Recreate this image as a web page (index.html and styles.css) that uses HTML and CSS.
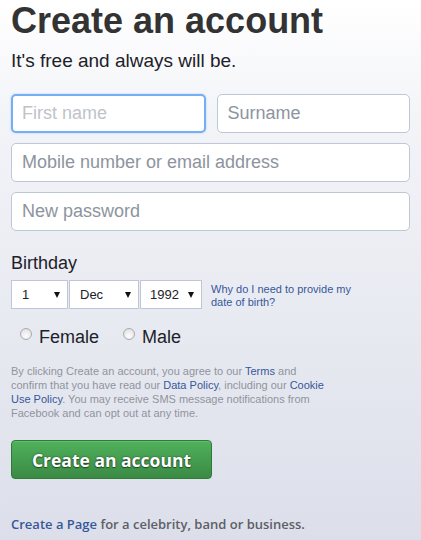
FILE: index.html
```html
<!DOCTYPE html>
<html lang="en">
<head>
<meta charset="utf-8">
<title>Create an account</title>
<link rel="stylesheet" href="styles.css">
</head>
<body>
<main class="signup">
  <h1 class="title">Create an account</h1>
  <p class="subtitle">It's free and always will be.</p>

  <div class="fields">
    <div class="row">
      <input class="field focused" type="text" placeholder="First name">
      <input class="field" type="text" placeholder="Surname">
    </div>
    <input class="field" type="text" placeholder="Mobile number or email address">
    <input class="field" type="password" placeholder="New password">
  </div>

  <div class="birthday">
    <div class="label">Birthday</div>
    <div class="bday-row">
      <div class="selects">
        <span class="select s-day"><select><option>1</option></select></span>
        <span class="select s-month"><select><option>Dec</option></select></span>
        <span class="select s-year"><select><option>1992</option></select></span>
      </div>
      <a class="why" href="#">Why do I need to provide my date of birth?</a>
    </div>
  </div>

  <div class="gender">
    <label class="radio"><input type="radio" name="sex"><span>Female</span></label>
    <label class="radio"><input type="radio" name="sex"><span>Male</span></label>
  </div>

  <p class="terms">By clicking Create an account, you agree to our <a href="#">Terms</a> and confirm that you have read our <a href="#">Data Policy</a>, including our <a href="#">Cookie Use Policy</a>. You may receive SMS message notifications from Facebook and can opt out at any time.</p>

  <button class="submit" type="button">Create an account</button>

  <hr class="sep">

  <p class="page-link"><a href="#">Create a Page</a> for a celebrity, band or business.</p>
</main>
</body>
</html>
```

FILE: styles.css
```css
html, body {
  margin: 0;
  padding: 0;
}
body {
  width: 421px;
  height: 540px;
  overflow: hidden;
  background: linear-gradient(#ffffff 0px, #f3f4f8 120px, #dcdfea 540px);
  font-family: "Liberation Sans", Arial, sans-serif;
  color: #1d2129;
}
.signup {
  padding: 0 11px;
  width: 399px;
}
.title {
  margin: 0;
  font-size: 36px;
  font-weight: bold;
  color: #333333;
  line-height: 41px;
}
.subtitle {
  margin: 9px 0 0;
  font-size: 19px;
  line-height: 22px;
  color: #1d2129;
}
.fields {
  margin-top: 22px;
  display: flex;
  flex-direction: column;
  gap: 10px;
}
.row {
  display: flex;
  gap: 11px;
}
.field {
  box-sizing: border-box;
  height: 39px;
  width: 100%;
  margin: 0;
  border: 1px solid #bdc7d8;
  border-radius: 5px;
  background: #fff;
  padding: 0 10px;
  font-family: "Liberation Sans", Arial, sans-serif;
  font-size: 18px;
  color: #1d2129;
  outline: none;
}
.row .field {
  flex: 1 1 0;
  min-width: 0;
}
.field::placeholder {
  color: #8d949e;
}
.field.focused {
  border: 2px solid #75aef4;
  padding-left: 9px;
  box-shadow: 0 0 2px rgba(110, 170, 240, 0.6);
}
.field.focused::placeholder {
  color: #bec3c9;
}
.birthday {
  margin-top: 22px;
}
.label {
  font-size: 18px;
  line-height: 21px;
  color: #1d2129;
}
.bday-row {
  margin-top: 6px;
  display: flex;
  align-items: flex-start;
}
.selects {
  display: flex;
  gap: 1px;
}
.select {
  position: relative;
  display: block;
}
.select select {
  appearance: none;
  -webkit-appearance: none;
  box-sizing: border-box;
  height: 29px;
  margin: 0;
  border: 1px solid #bdc7d8;
  border-radius: 0;
  background: #fff;
  padding: 0 0 0 10px;
  font-family: "Liberation Sans", Arial, sans-serif;
  font-size: 13px;
  color: #1d2129;
  outline: none;
}
.s-day select { width: 57px; }
.s-month select { width: 70px; }
.s-year select { width: 62px; padding-left: 9px; }
.select::after {
  content: "";
  position: absolute;
  right: 8px;
  top: 12px;
  border-left: 3px solid transparent;
  border-right: 3px solid transparent;
  border-top: 6px solid #111;
  pointer-events: none;
}
.why {
  display: block;
  width: 150px;
  margin: 3px 0 0 9px;
  font-size: 11px;
  line-height: 13px;
  color: #365899;
  text-decoration: none;
}
.gender {
  margin-top: 18px;
  display: flex;
  gap: 24px;
  padding-left: 9px;
}
.radio {
  display: flex;
  align-items: flex-start;
  gap: 7px;
  font-size: 18px;
  line-height: 21px;
  color: #1d2129;
}
.radio input {
  appearance: none;
  -webkit-appearance: none;
  box-sizing: border-box;
  width: 12px;
  height: 12px;
  margin: 1px 0 0;
  border-radius: 50%;
  border: 1px solid #a9abb0;
  background: radial-gradient(circle at 50% 70%, #fdfdfd 0, #e6e6e8 70%, #cfd0d4 100%);
}
.terms {
  margin: 16px 0 0;
  width: 318px;
  font-size: 11px;
  line-height: 14px;
  color: #90949c;
}
.terms a {
  color: #365899;
  text-decoration: none;
}
.submit {
  display: block;
  box-sizing: border-box;
  margin-top: 20px;
  width: 201px;
  height: 39px;
  border: 1px solid #2f7a36;
  border-radius: 4px;
  background: linear-gradient(#4fb15b, #3b8a45);
  box-shadow: inset 0 1px 0 rgba(255, 255, 255, 0.15);
  font-family: "Open Sans", "Liberation Sans", sans-serif;
  font-size: 17.5px;
  font-weight: bold;
  color: #ffffff;
  text-shadow: 0 0 2px rgba(0, 0, 0, 0.6), 0 1px 1px rgba(0, 0, 0, 0.4);
  padding: 0;
  cursor: pointer;
}
.sep {
  margin: 20px 0 0;
  border: 0;
  border-top: 1px solid #e0dfe5;
  height: 0;
}
.page-link {
  margin: 16px 0 0;
  font-family: "Open Sans", "Liberation Sans", sans-serif;
  font-size: 13px;
  font-weight: 600;
  line-height: 17px;
  color: #5c5f66;
}
.page-link a {
  color: #365899;
  text-decoration: none;
}
```
